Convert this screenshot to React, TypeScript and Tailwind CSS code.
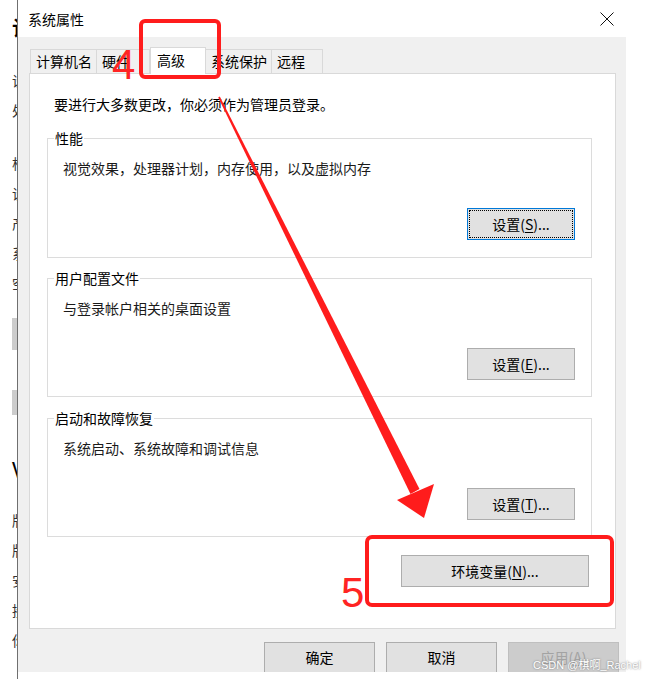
import React from 'react'

const cjk = "font-['Noto_Sans_CJK_SC','Microsoft_YaHei',sans-serif]"

function WinButton({ label, mnemonic, tail = '...', className = '', focused = false, disabled = false }: {
  label: string
  mnemonic?: string
  tail?: string
  className?: string
  focused?: boolean
  disabled?: boolean
}) {
  return (
    <div
      className={`flex items-center justify-center border text-[14px] ${
        disabled
          ? 'bg-[#cccccc] border-[#bfbfbf] text-[#a3a3a3]'
          : focused
            ? 'bg-[#e1e1e1] border-[#0078d7] text-black outline-1 outline-dotted outline-black outline-offset-[-3px]'
            : 'bg-[#e1e1e1] border-[#adadad] text-black'
      } ${className}`}
    >
      <span>
        {label}
        {mnemonic && (
          <>
            (<span className="underline underline-offset-2">{mnemonic}</span>){tail}
          </>
        )}
      </span>
    </div>
  )
}

function GroupBox({ title, desc, btn, mnemonic, focused, className = '' }: {
  title: string
  desc: string
  btn: string
  mnemonic: string
  focused?: boolean
  className?: string
}) {
  return (
    <div className={`w-[545px] border border-[#dcdcdc] flex flex-col ${className}`}>
      <div className="-mt-[11px] ml-[6px] px-[1px] w-fit bg-white leading-[20px] text-black">{title}</div>
      <div className="mt-[10px] pl-[15px] leading-[20px] text-[#1a1a1a]">{desc}</div>
      <div className="mt-[30px] flex justify-end pr-[16px]">
        <WinButton label={btn} mnemonic={mnemonic} focused={focused} className="w-[108px] h-[32px]" />
      </div>
    </div>
  )
}

export default function App() {
  const tabs = [
    { name: '计算机名', w: 'w-[67px]' },
    { name: '硬件', w: 'w-[54px]' },
    { name: '高级', w: 'w-[56px]', active: true },
    { name: '系统保护', w: 'w-[67px]' },
    { name: '远程', w: 'w-[52px]' },
  ]

  return (
    <div className={`relative w-[646px] h-[679px] bg-white overflow-hidden flex ${cjk} text-[14px]`}>
      {/* background window edge */}
      <div className="w-[18px] h-full shrink-0 overflow-hidden border-r border-[#6f6f6f] flex flex-col pt-[13px] pl-[12px] text-[#333] leading-[30px] whitespace-nowrap">
        <div className="h-[30px] text-[20px] font-bold text-black">计</div>
        <div className="h-[22px]" />
        <div className="h-[30px]">设</div>
        <div className="h-[30px]">处</div>
        <div className="h-[23px]" />
        <div className="h-[30px]">构</div>
        <div className="h-[30px]">设</div>
        <div className="h-[30px]">产</div>
        <div className="h-[30px]">系</div>
        <div className="h-[30px]">空</div>
        <div className="h-[20px]" />
        <div className="h-[32px]"><div className="h-full bg-[#cccccc]" /></div>
        <div className="h-[40px]" />
        <div className="h-[25px]"><div className="h-full bg-[#cccccc]" /></div>
        <div className="h-[38px]" />
        <div className="h-[30px] text-[22px] text-black">V</div>
        <div className="h-[22px]" />
        <div className="h-[30px]">版</div>
        <div className="h-[30px]">版</div>
        <div className="h-[30px]">安</div>
        <div className="h-[30px]">接</div>
        <div className="h-[30px]">你</div>
      </div>

      {/* dialog */}
      <div className="w-[608px] shrink-0 flex flex-col">
        <div className="h-[37px] bg-white flex items-center justify-between pl-[10px] pr-[11px]">
          <span className="text-black leading-[20px]">系统属性</span>
          <svg width="14" height="14" viewBox="0 0 14 14" className="mr-[1px]">
            <path d="M0.5 0.5 L13.5 13.5 M13.5 0.5 L0.5 13.5" stroke="#111" strokeWidth="1" />
          </svg>
        </div>

        <div className="h-[635px] bg-[#f0f0f0] flex flex-col pl-[11px] pr-[10px] pt-[10px]">
          {/* tabs */}
          <div className="h-[26px] flex items-end pl-[1px]">
            {tabs.map((t) =>
              t.active ? (
                <div
                  key={t.name}
                  className={`${t.w} h-[27px] -mb-px relative z-10 bg-white border border-b-0 border-[#d9d9d9] pl-[6px] pt-[2px] leading-[20px] text-black`}
                >
                  {t.name}
                </div>
              ) : (
                <div
                  key={t.name}
                  className={`${t.w} h-[24px] bg-[#f0f0f0] border border-b-0 border-[#d9d9d9] -ml-px first:ml-0 pl-[5px] pt-[1px] leading-[20px] text-black`}
                >
                  {t.name}
                </div>
              )
            )}
          </div>

          {/* tab panel */}
          <div className="h-[557px] bg-white border border-[#d9d9d9] flex flex-col">
            <div className="mt-[20px] pl-[24px] leading-[20px] text-black">要进行大多数更改，你必须作为管理员登录。</div>
            <div className="pl-[17px] flex flex-col">
              <GroupBox
                className="mt-[24px] h-[120px]"
                title="性能"
                desc="视觉效果，处理器计划，内存使用，以及虚拟内存"
                btn="设置"
                mnemonic="S"
                focused
              />
              <GroupBox
                className="mt-[20px] h-[119px]"
                title="用户配置文件"
                desc="与登录帐户相关的桌面设置"
                btn="设置"
                mnemonic="E"
              />
              <GroupBox
                className="mt-[21px] h-[119px]"
                title="启动和故障恢复"
                desc="系统启动、系统故障和调试信息"
                btn="设置"
                mnemonic="T"
              />
              <div className="w-[545px] mt-[18px] flex justify-end pr-[3px]">
                <WinButton label="环境变量" mnemonic="N" className="w-[188px] h-[32px]" />
              </div>
            </div>
          </div>

          {/* bottom buttons */}
          <div className="mt-[13px] flex justify-end gap-[11px] -mr-[3px]">
            <WinButton label="确定" className="w-[111px] h-[30px] border-b-0" />
            <WinButton label="取消" className="w-[111px] h-[30px] border-b-0" />
            <WinButton label="应用" mnemonic="A" tail="" disabled className="w-[111px] h-[30px] border-b-0" />
          </div>
        </div>
      </div>

      {/* watermark */}
      <div className="absolute left-[533px] top-[658px] font-['Liberation_Sans','Noto_Sans_CJK_SC',sans-serif] text-[11px] leading-[15px] text-white [text-shadow:0_0_2px_#6b6b6b] whitespace-nowrap">
        CSDN @棋啊_Rachel
      </div>

      {/* red annotations */}
      <svg className="absolute left-0 top-0 pointer-events-none" width="646" height="679" viewBox="0 0 646 679">
        <rect x="141" y="21" width="78" height="56" rx="4" fill="none" stroke="#ff1c1c" strokeWidth="4" />
        <rect x="367" y="537" width="245" height="68" rx="5" fill="none" stroke="#ff1c1c" strokeWidth="4" />
        <polygon points="218.2,97.4 219.8,96.6 419.5,489 410.5,494" fill="#ff1c1c" />
        <polygon points="397,500 434,484 424,518" fill="#ff1c1c" />
      </svg>
      <div className="absolute left-[112px] top-[44px] font-['Liberation_Sans',Arial,sans-serif] text-[42px] leading-[42px] text-[#ff2424]">4</div>
      <div className="absolute left-[341px] top-[572px] font-['Liberation_Sans',Arial,sans-serif] text-[42px] leading-[42px] text-[#ff2424]">5</div>
    </div>
  )
}
